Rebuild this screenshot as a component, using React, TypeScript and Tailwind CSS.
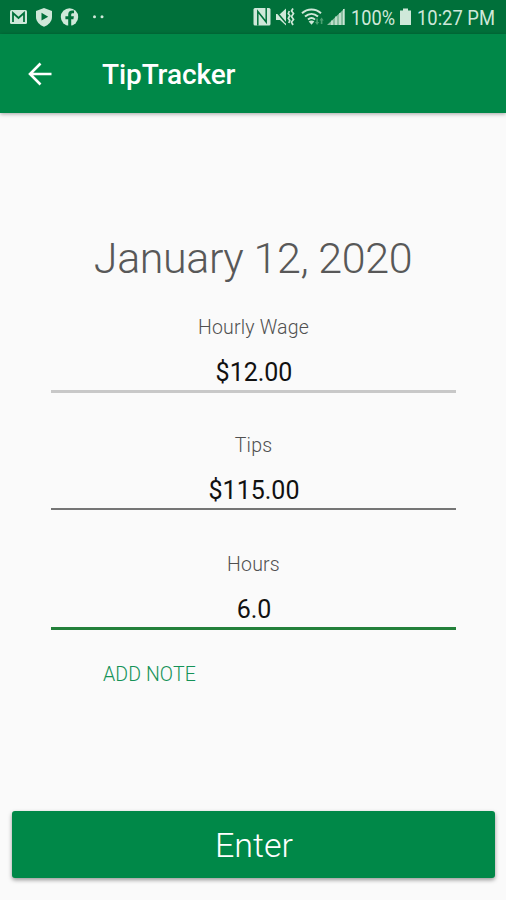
import React from 'react';

interface FieldProps {
  label: string;
  value: string;
  lineClass: string;
}

function StatusBar() {
  return (
    <div className="flex h-[34px] items-center bg-[#00703a] text-[#cfe8d9]">
      <svg className="h-[34px] w-[110px] shrink-0" viewBox="0 0 110 34" fill="currentColor">
        <rect x="10" y="10" width="17" height="14" rx="1.5" />
        <path d="M13 22V13l5.500 5 5.500-5v9" fill="none" stroke="#00703a" strokeWidth="1.800" />
        <path d="M44 8l8 3v6c0 4.500-3.500 8-8 9.800-4.500-1.800-8-5.300-8-9.800v-6z" />
        <path d="M41.500 12.800v7.800l6.700-3.900z" fill="#00703a" />
        <circle cx="69.500" cy="17" r="8.700" />
        <path d="M68.200 26v-6.800h-2.800v-2.900h2.800v-1.800c0-2.700 1.600-4 4-4h1.800v2.700h-1.300c-1.200 0-1.500.6-1.500 1.500v1.600h2.700l-.5 2.900h-2.200V26z" fill="#00703a" />
        <circle cx="94.500" cy="16.800" r="1.500" />
        <circle cx="102" cy="16.800" r="1.500" />
      </svg>
      <svg className="ml-[140px] h-[34px] w-[98px] shrink-0" viewBox="250 0 98 34" fill="currentColor">
        {/* NFC */}
        <rect x="253.500" y="8" width="17" height="17.500" rx="1.5" />
        <path d="M257.800 25.500V11.500L266.200 22V8" fill="none" stroke="#00703a" strokeWidth="1.500" />
        {/* Vibrate / mute */}
        <path d="M276 14h4l6-5.500v17l-6-5.500h-4z" />
        <path d="M275 10l11 13" fill="none" stroke="#00703a" strokeWidth="1.500" />
        <path d="M289.300 11l-1 2.500 1.500 2-1.500 3 1.500 2-1 2.500M293 8.500l-1.500 2.500 2 2.500-2 3 2 3-2 2.500 1.500 3" fill="none" stroke="currentColor" strokeWidth="1.700" />
        {/* Wifi */}
        <path d="M302 13.200c5.500-5 13.500-5 19 0M305 16.500c4-3.500 9-3.500 13 0M308 19.600c2.200-1.900 5-1.900 7 0" fill="none" stroke="currentColor" strokeWidth="2" />
        <path d="M311.500 24.800l-2.800-3.300c1.600-1.300 4-1.300 5.600 0z" />
        <path d="M315 22h1.300v-3.500h1.600V22h1.300l-2.100 3zM319.500 20.500h1.300V24h1.600v-3.500h1.300l-2.100-3z" fill="#4ba071" />
        {/* Signal */}
        <path d="M327 25l17.500-16.500V25z" fill="#88bd9f" />
        <path d="M332 20.500V25M336 16.500V25M340 13V25M343.800 9V25" stroke="currentColor" strokeWidth="1.500" />
      </svg>
      <svg className="h-[34px] w-[158px] shrink-0" viewBox="348 0 158 34" fill="currentColor">
        <text x="351" y="25" textLength="44" lengthAdjust="spacingAndGlyphs" className="font-['Roboto'] text-[21px]">100%</text>
        <path d="M400 10.500h3V8.500h5v2h3V25h-11z" />
        <text x="417" y="25" textLength="78" lengthAdjust="spacingAndGlyphs" className="font-['Roboto'] text-[21px]">10:27 PM</text>
      </svg>
    </div>
  );
}

function Field({ label, value, lineClass }: FieldProps) {
  return (
    <div className="flex h-[118.500px] w-[405px] flex-col items-center">
      <label className="pl-px text-[19.500px] leading-6 font-light tracking-[0.2px] text-[#505050]">{label}</label>
      <div className="mt-[15px] flex h-[36px] w-full items-center justify-center pl-[2px] text-[25px] text-[#111]">{value}</div>
      <div className={`w-full ${lineClass}`} />
    </div>
  );
}

export default function App() {
  return (
    <div className="flex h-[900px] w-[506px] flex-col bg-[#fafafa] font-['Roboto',sans-serif]">
      <StatusBar />
      <header className="flex h-[79px] shrink-0 items-center bg-[#008848] text-white shadow-[0_1px_4px_rgba(0,0,0,0.35)]">
        <svg className="ml-[28px] h-6 w-6" viewBox="0 0 24 24" fill="none" stroke="currentColor" strokeWidth="2.600">
          <path d="M23.500 12H2M12.500 1.500L2 12l10.500 10.500" />
        </svg>
        <h1 className="ml-[50px] pt-[2px] text-[28px] font-medium tracking-[-0.1px]">TipTracker</h1>
      </header>
      <main className="flex flex-1 flex-col items-center">
        <h2 className="mt-[120px] text-[43px] leading-[50px] font-light tracking-[-0.4px] text-[#585858]">January 12, 2020</h2>
        <div className="mt-[32.500px]">
          <Field label="Hourly Wage" value="$12.00" lineClass="-mt-px h-[3px] bg-[#c8c8c8]" />
          <Field label="Tips" value="$115.00" lineClass="-mt-px h-[1.500px] bg-[#757575]" />
          <Field label="Hours" value="6.0" lineClass="-mt-px h-[3px] bg-[#23803a]" />
        </div>
        <button className="mr-auto -mt-[8px] ml-[103px] text-[19.500px] leading-6 font-light tracking-[0.1px] text-[#159257]">ADD NOTE</button>
        <button className="mt-auto mb-[22px] h-[67px] w-[483px] rounded-[3px] bg-[#008848] pt-[2px] pl-[2px] text-[34px] font-light text-white shadow-[0_2px_4px_rgba(0,0,0,0.4)]">
          Enter
        </button>
      </main>
    </div>
  );
}
